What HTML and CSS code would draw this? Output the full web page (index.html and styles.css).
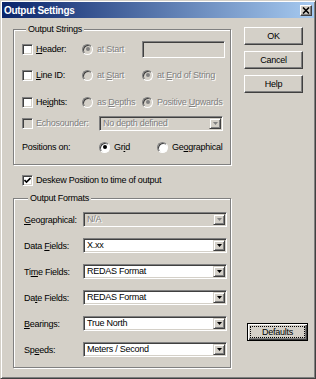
FILE: index.html
```html
<!DOCTYPE html>
<html lang="en">
<head>
    <meta charset="UTF-8">
    <title>Output Settings</title>
    <link rel="stylesheet" href="styles.css">
</head>
<body>

<div class="window">
    <div class="titlebar">
        <span class="title">Output Settings</span>
        <span class="close-btn">
            <svg width="8" height="7" viewBox="0 0 8 7"><path d="M1 0.5L7 6.5M7 0.5L1 6.5" stroke="#000" stroke-width="1.6"/></svg>
        </span>
    </div>

    <div class="content">
        <div class="main">

            <!-- Output Strings -->
            <fieldset class="group strings">
                <legend>Output Strings</legend>
                <div class="row">
                    <div class="opt w60"><span class="check"></span><span><u>H</u>eader:</span></div>
                    <div class="opt w60 off"><span class="radio on"></span><span>at Start</span></div>
                    <span class="edit"></span>
                </div>
                <div class="row gap8">
                    <div class="opt w60"><span class="check"></span><span><u>L</u>ine ID:</span></div>
                    <div class="opt w60 off"><span class="radio"></span><span>at <u>S</u>tart</span></div>
                    <div class="opt off"><span class="radio on"></span><span>at <u>E</u>nd of String</span></div>
                </div>
                <div class="row gap9">
                    <div class="opt w60"><span class="check"></span><span>He<u>i</u>ghts:</span></div>
                    <div class="opt w60 off"><span class="radio"></span><span>as <u>D</u>epths</span></div>
                    <div class="opt off"><span class="radio on"></span><span>Positive <u>U</u>pwards</span></div>
                </div>
                <div class="row gap3">
                    <div class="opt w77 off"><span class="check"></span><span>Echosounder:</span></div>
                    <div class="combo off w124">
                        <span class="val">No depth defined</span>
                        <span class="drop"><svg width="5" height="3" viewBox="0 0 5 3"><path d="M0 0H5L2.5 3Z"/></svg></span>
                    </div>
                </div>
                <div class="row gap6">
                    <span class="lbl w77">Positions on:</span>
                    <div class="opt w58"><span class="radio on"></span><span>Gr<u>i</u>d</span></div>
                    <div class="opt"><span class="radio"></span><span>Ge<u>o</u>graphical</span></div>
                </div>
            </fieldset>

            <div class="deskew">
                <span class="check">
                    <svg width="7" height="7" viewBox="0 0 7 7"><path d="M0.5 3L2.5 5L6.5 1" fill="none" stroke="#000" stroke-width="1.6"/></svg>
                </span>
                <span>Deskew Position to time of output</span>
            </div>

            <!-- Output Formats -->
            <fieldset class="group formats">
                <legend>Output Formats</legend>
                <div class="frow">
                    <span class="lbl w59"><u>G</u>eographical:</span>
                    <div class="combo off w144">
                        <span class="val">N/A</span>
                        <span class="drop"><svg width="5" height="3" viewBox="0 0 5 3"><path d="M0 0H5L2.5 3Z"/></svg></span>
                    </div>
                </div>
                <div class="frow">
                    <span class="lbl w59">Data <u>F</u>ields:</span>
                    <div class="combo w144">
                        <span class="val">X.xx</span>
                        <span class="drop"><svg width="5" height="3" viewBox="0 0 5 3"><path d="M0 0H5L2.5 3Z"/></svg></span>
                    </div>
                </div>
                <div class="frow">
                    <span class="lbl w59">Ti<u>m</u>e Fields:</span>
                    <div class="combo w144">
                        <span class="val">REDAS Format</span>
                        <span class="drop"><svg width="5" height="3" viewBox="0 0 5 3"><path d="M0 0H5L2.5 3Z"/></svg></span>
                    </div>
                </div>
                <div class="frow">
                    <span class="lbl w59">Da<u>t</u>e Fields:</span>
                    <div class="combo w144">
                        <span class="val">REDAS Format</span>
                        <span class="drop"><svg width="5" height="3" viewBox="0 0 5 3"><path d="M0 0H5L2.5 3Z"/></svg></span>
                    </div>
                </div>
                <div class="frow">
                    <span class="lbl w59"><u>B</u>earings:</span>
                    <div class="combo w144">
                        <span class="val">True North</span>
                        <span class="drop"><svg width="5" height="3" viewBox="0 0 5 3"><path d="M0 0H5L2.5 3Z"/></svg></span>
                    </div>
                </div>
                <div class="frow">
                    <span class="lbl w59">Sp<u>e</u>eds:</span>
                    <div class="combo w144">
                        <span class="val">Meters / Second</span>
                        <span class="drop"><svg width="5" height="3" viewBox="0 0 5 3"><path d="M0 0H5L2.5 3Z"/></svg></span>
                    </div>
                </div>
            </fieldset>
        </div>

        <!-- Buttons -->
        <div class="side">
            <span class="btn">OK</span>
            <span class="btn">Cancel</span>
            <span class="btn">Help</span>
            <span class="btn default">Defaults</span>
        </div>
    </div>
</div>

</body>
</html>
```

FILE: styles.css
```css
* {
    box-sizing: border-box;
}

body {
    margin: 0;
    font-family: "Liberation Sans", Arial, sans-serif;
    font-size: 9px;
    letter-spacing: -0.25px;
    color: #000;
    background: #d4d0c8;
}

u {
    text-decoration: underline;
}

.window {
    width: 316px;
    height: 379px;
    background: #d4d0c8;
    border: 1px solid;
    border-color: #d4d0c8 #404040 #404040 #d4d0c8;
    box-shadow: inset 1px 1px 0 #fff, inset -1px -1px 0 #808080;
    padding: 1px;
    display: flex;
    flex-direction: column;
}

.titlebar {
    height: 16px;
    flex: none;
    background: linear-gradient(to right, #0a246a, #a6caf0);
    display: flex;
    align-items: center;
    justify-content: space-between;
    padding: 0 2px;
}

.title {
    color: #fff;
    font-weight: bold;
    font-size: 10px;
    letter-spacing: -0.3px;
}

.close-btn {
    width: 12px;
    height: 11px;
    background: #d4d0c8;
    border: 1px solid;
    border-color: #fff #404040 #404040 #fff;
    box-shadow: inset -1px -1px 0 #808080;
    display: flex;
    align-items: center;
    justify-content: center;
}

.content {
    flex: 1;
    display: flex;
    padding: 5px 0 0 11px;
}

.main {
    width: 218px;
    flex: none;
}

/* group boxes */
.group {
    margin: 0;
    min-width: 0;
    border: 1px solid #808080;
    box-shadow: inset 1px 1px 0 #fff, 1px 1px 0 #fff;
}

.group legend {
    margin-left: 4px;
    padding: 0 2px;
    height: 12px;
    line-height: 12px;
    background: #d4d0c8;
}

.strings {
    padding: 5px 0 8px 8px;
}

.formats {
    margin-top: 6px;
    padding: 8px 0 10px 10px;
}

.row {
    display: flex;
    align-items: center;
    height: 18px;
}

.gap8 { margin-top: 8px; }
.gap9 { margin-top: 9px; }
.gap3 { margin-top: 3px; }
.gap6 { margin-top: 6px; }

.opt {
    display: flex;
    align-items: center;
    gap: 4px;
    flex: none;
}

.opt .check {
    margin-right: -1px;
}

.w58 { width: 58px; }
.w59 { width: 59px; }
.w60 { width: 60px; }
.w77 { width: 77px; }
.w124 { width: 124px; }
.w144 { width: 144px; }

.lbl {
    flex: none;
}

.off {
    color: #808080;
    text-shadow: 1px 1px 0 #fff;
}

/* checkbox and radio */
.check {
    width: 11px;
    height: 11px;
    flex: none;
    background: #fff;
    border: 1px solid;
    border-color: #808080 #fff #fff #808080;
    box-shadow: inset 1px 1px 0 #404040, inset -1px -1px 0 #d4d0c8;
    display: flex;
    align-items: center;
    justify-content: center;
}

.off .check {
    background: #d4d0c8;
}

.radio {
    width: 11px;
    height: 11px;
    flex: none;
    border-radius: 50%;
    background: #fff;
    border: 1px solid;
    border-color: #808080 #fff #fff #808080;
    box-shadow: inset 1px 1px 0 #404040;
    display: flex;
    align-items: center;
    justify-content: center;
}

.radio.on::after {
    content: "";
    width: 4px;
    height: 4px;
    border-radius: 50%;
    background: #000;
}

.off .radio {
    background: #d4d0c8;
}

.off .radio.on::after {
    background: #808080;
}

/* edit and combo boxes */
.edit {
    width: 83px;
    height: 17px;
    background: #d4d0c8;
    border: 1px solid;
    border-color: #808080 #fff #fff #808080;
    box-shadow: inset 1px 1px 0 #404040, inset -1px -1px 0 #d4d0c8;
}

.combo {
    display: flex;
    height: 15px;
    flex: none;
    padding: 1px;
    background: #fff;
    border: 1px solid;
    border-color: #808080 #fff #fff #808080;
    box-shadow: inset 1px 1px 0 #404040, inset -1px -1px 0 #d4d0c8;
}

.combo .val {
    flex: 1;
    padding-left: 2px;
    line-height: 11px;
    white-space: nowrap;
}

.combo .drop {
    width: 12px;
    height: 11px;
    background: #d4d0c8;
    border: 1px solid;
    border-color: #d4d0c8 #404040 #404040 #d4d0c8;
    box-shadow: inset 1px 1px 0 #fff, inset -1px -1px 0 #808080;
    display: flex;
    align-items: center;
    justify-content: center;
}

.combo.off {
    background: #d4d0c8;
}

.combo.off .drop svg {
    fill: #808080;
}

.deskew {
    display: flex;
    align-items: center;
    gap: 3px;
    height: 12px;
    margin: 9px 0 0 9px;
}

.frow {
    display: flex;
    align-items: center;
    height: 15px;
}

.frow + .frow {
    margin-top: 11px;
}

/* push buttons */
.side {
    width: 59px;
    margin-left: 13px;
    display: flex;
    flex-direction: column;
    padding-top: 4px;
}

.btn {
    height: 18px;
    margin-bottom: 6px;
    display: flex;
    align-items: center;
    justify-content: center;
    background: #d4d0c8;
    border: 1px solid;
    border-color: #fff #404040 #404040 #fff;
    box-shadow: inset -1px -1px 0 #808080;
}

.btn.default {
    width: 61px;
    margin: auto 0 36px 3px;
    border: 1px solid #000;
    box-shadow: inset 1px 1px 0 #fff, inset -1px -1px 0 #404040, inset -2px -2px 0 #808080;
    outline: 1px dotted #000;
    outline-offset: -4px;
}
```
